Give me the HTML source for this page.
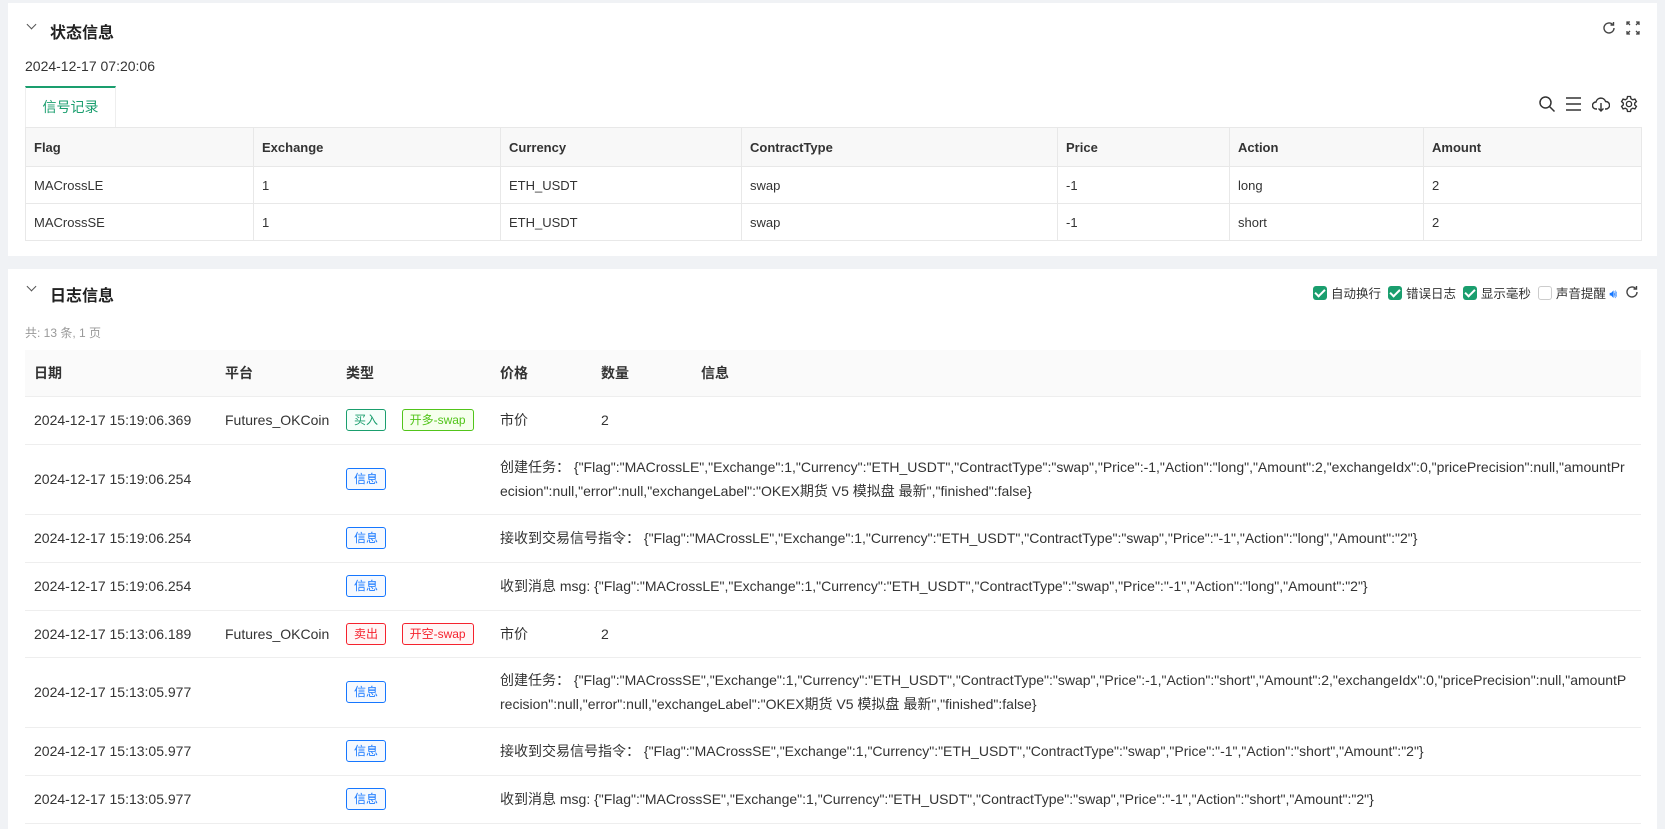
<!DOCTYPE html>
<html><head><meta charset="utf-8">
<style>
*{box-sizing:border-box;margin:0;padding:0}
body{width:1665px;height:826px;overflow:hidden;background:#f0f2f5;font-family:"Liberation Sans","Noto Sans CJK SC",sans-serif;color:#333;position:relative}
.panel{position:absolute;left:8px;width:1649px;background:#fff}
.abs{position:absolute}
.title{font-size:16px;font-weight:bold;color:#222}
.chev{width:7px;height:7px;border-right:1.3px solid #555;border-bottom:1.3px solid #555;transform:rotate(45deg)}
table{border-collapse:collapse;position:absolute}
.t1 td,.t1 th{border:1px solid #e8e8e8;font-size:13px;text-align:left;padding:0 8px;height:37px}
.t1 th{background:#f8f8f8;font-weight:bold;height:39px;color:#333}
.t2{table-layout:fixed}
.t2 td,.t2 th{border-bottom:1px solid #eee;font-size:14px;text-align:left;padding:0 0 0 9px;vertical-align:middle}
.t2 th{background:#fafafa;font-weight:bold;height:46px}
.tag{display:inline-block;height:22px;line-height:20px;font-size:12px;border:1px solid;border-radius:3px;padding:0 7px;vertical-align:middle}
.g{color:#1a9e6e;border-color:#1a9e6e;background:#f6fffb}
.lg{color:#52c41a;border-color:#52c41a;background:#f6ffed}
.r{color:#f5222d;border-color:#f5222d;background:#fff6f6}
.b{color:#1677ff;border-color:#1677ff;background:#f5f9ff}
.info{word-break:break-all;line-height:24px;padding-right:12px!important}
.cb{display:inline-block;width:14px;height:14px;border-radius:3px;background:#1a9e6e;vertical-align:-2px;position:relative;margin-right:4px}
.cb:after{content:"";position:absolute;left:4px;top:1px;width:4px;height:8px;border-right:2px solid #fff;border-bottom:2px solid #fff;transform:rotate(45deg)}
.cbx{display:inline-block;width:14px;height:14px;border-radius:3px;border:1px solid #ccc;vertical-align:-2px;margin-right:4px}
</style></head><body>

<div class="panel" style="top:3px;height:253px">
  <div class="abs chev" style="left:20px;top:18px"></div>
  <div class="abs title" style="left:42px;top:16px">状态信息</div>
  <svg class="abs" style="left:1593px;top:17px" width="16" height="16" viewBox="0 0 16 16"><path d="M13 8a5 5 0 1 1-1.5-3.6" fill="none" stroke="#444" stroke-width="1.4"/><path d="M12.5 2v3h-3" fill="none" stroke="#444" stroke-width="1.4"/></svg>
  <svg class="abs" style="left:1618px;top:18px" width="14" height="14" viewBox="0 0 14 14" stroke="#444" stroke-width="1.3" fill="none"><path d="M1 4V1h3M10 1h3v3M13 10v3h-3M4 13H1v-3M1 1l3 3M13 1l-3 3M13 13l-3-3M1 13l3-3"/></svg>
  <div class="abs" style="left:17px;top:55px;font-size:14px">2024-12-17 07:20:06</div>
  <div class="abs" style="left:17px;top:83px;width:91px;height:41px;border-top:2px solid #1a9e6e;border-left:1px solid #eee;border-right:1px solid #eee;color:#1a9e6e;font-size:14px;text-align:center;line-height:38px;background:#fff;z-index:2">信号记录</div>
  <svg class="abs" style="left:1530px;top:92px" width="18" height="18" viewBox="0 0 18 18" fill="none" stroke="#333" stroke-width="1.5"><circle cx="7.5" cy="7.5" r="5.5"/><path d="M11.5 11.5l5 5"/></svg>
  <svg class="abs" style="left:1557px;top:93px" width="17" height="16" viewBox="0 0 17 16" stroke="#333" stroke-width="1.5"><path d="M1 2h15M1 8h15M1 14h15"/></svg>
  <svg class="abs" style="left:1584px;top:92px" width="18" height="18" viewBox="0 0 18 18" fill="none" stroke="#333" stroke-width="1.4"><path d="M5 14H4a3.5 3.5 0 0 1 0-7 5 5 0 0 1 9.6-.5A3.5 3.5 0 0 1 14 14h-1"/><path d="M9 8v8M6.5 13.5L9 16l2.5-2.5"/></svg>
  <svg class="abs" style="left:1612px;top:92px" width="18" height="18" viewBox="0 0 24 24" fill="none" stroke="#333" stroke-width="1.8"><circle cx="12" cy="12" r="3.5"/><path d="M10 2h4l.6 3 2.4 1.4 2.9-1 2 3.4-2.3 2v2.4l2.3 2-2 3.4-2.9-1-2.4 1.4-.6 3h-4l-.6-3L7 17.6l-2.9 1-2-3.4 2.3-2v-2.4l-2.3-2 2-3.4 2.9 1L9.4 5z"/></svg>
  <table class="t1" style="left:17px;top:124px;width:1617px">
    <tr><th style="width:228px">Flag</th><th style="width:247px">Exchange</th><th style="width:241px">Currency</th><th style="width:316px">ContractType</th><th style="width:172px">Price</th><th style="width:194px">Action</th><th>Amount</th></tr>
    <tr><td>MACrossLE</td><td>1</td><td>ETH_USDT</td><td>swap</td><td>-1</td><td>long</td><td>2</td></tr>
    <tr><td>MACrossSE</td><td>1</td><td>ETH_USDT</td><td>swap</td><td>-1</td><td>short</td><td>2</td></tr>
  </table>
</div>

<div class="panel" style="top:269px;height:560px">
  <div class="abs chev" style="left:20px;top:14px"></div>
  <div class="abs title" style="left:42px;top:13px">日志信息</div>
  <div class="abs" style="left:1305px;top:14px;font-size:12.5px;color:#333;white-space:nowrap">
    <span class="cb"></span>自动换行&nbsp; <span class="cb"></span>错误日志&nbsp; <span class="cb"></span>显示毫秒&nbsp; <span class="cbx"></span>声音提醒 <span style="color:#1677ff">🔊︎</span>
  </div>
  <svg class="abs" style="left:1616px;top:15px" width="16" height="16" viewBox="0 0 16 16"><path d="M13 8a5 5 0 1 1-1.5-3.6" fill="none" stroke="#444" stroke-width="1.4"/><path d="M12.5 2v3h-3" fill="none" stroke="#444" stroke-width="1.4"/></svg>
  <div class="abs" style="left:17px;top:55px;font-size:12px;color:#999">共: 13 条, 1 页</div>
  <table class="t2" style="left:17px;top:81px;width:1616px">
    <colgroup><col style="width:191px"><col style="width:121px"><col style="width:154px"><col style="width:101px"><col style="width:100px"><col></colgroup>
    <tr><th>日期</th><th>平台</th><th>类型</th><th>价格</th><th>数量</th><th>信息</th></tr>
    <tr style="height:48px"><td>2024-12-17 15:19:06.369</td><td>Futures_OKCoin</td><td><span class="tag g">买入</span>&nbsp;&nbsp;&nbsp;&nbsp;<span class="tag lg">开多-swap</span></td><td>市价</td><td>2</td><td></td></tr>
    <tr style="height:70px"><td>2024-12-17 15:19:06.254</td><td></td><td><span class="tag b">信息</span></td><td colspan="3" class="info">创建任务： {"Flag":"MACrossLE","Exchange":1,"Currency":"ETH_USDT","ContractType":"swap","Price":-1,"Action":"long","Amount":2,"exchangeIdx":0,"pricePrecision":null,"amountPrecision":null,"error":null,"exchangeLabel":"OKEX期货 V5 模拟盘 最新","finished":false}</td></tr>
    <tr style="height:48px"><td>2024-12-17 15:19:06.254</td><td></td><td><span class="tag b">信息</span></td><td colspan="3" class="info">接收到交易信号指令： {"Flag":"MACrossLE","Exchange":1,"Currency":"ETH_USDT","ContractType":"swap","Price":"-1","Action":"long","Amount":"2"}</td></tr>
    <tr style="height:48px"><td>2024-12-17 15:19:06.254</td><td></td><td><span class="tag b">信息</span></td><td colspan="3" class="info">收到消息 msg: {"Flag":"MACrossLE","Exchange":1,"Currency":"ETH_USDT","ContractType":"swap","Price":"-1","Action":"long","Amount":"2"}</td></tr>
    <tr style="height:47px"><td>2024-12-17 15:13:06.189</td><td>Futures_OKCoin</td><td><span class="tag r">卖出</span>&nbsp;&nbsp;&nbsp;&nbsp;<span class="tag r">开空-swap</span></td><td>市价</td><td>2</td><td></td></tr>
    <tr style="height:70px"><td>2024-12-17 15:13:05.977</td><td></td><td><span class="tag b">信息</span></td><td colspan="3" class="info">创建任务： {"Flag":"MACrossSE","Exchange":1,"Currency":"ETH_USDT","ContractType":"swap","Price":-1,"Action":"short","Amount":2,"exchangeIdx":0,"pricePrecision":null,"amountPrecision":null,"error":null,"exchangeLabel":"OKEX期货 V5 模拟盘 最新","finished":false}</td></tr>
    <tr style="height:48px"><td>2024-12-17 15:13:05.977</td><td></td><td><span class="tag b">信息</span></td><td colspan="3" class="info">接收到交易信号指令： {"Flag":"MACrossSE","Exchange":1,"Currency":"ETH_USDT","ContractType":"swap","Price":"-1","Action":"short","Amount":"2"}</td></tr>
    <tr style="height:48px"><td>2024-12-17 15:13:05.977</td><td></td><td><span class="tag b">信息</span></td><td colspan="3" class="info">收到消息 msg: {"Flag":"MACrossSE","Exchange":1,"Currency":"ETH_USDT","ContractType":"swap","Price":"-1","Action":"short","Amount":"2"}</td></tr>
  </table>
</div>
</body></html>
